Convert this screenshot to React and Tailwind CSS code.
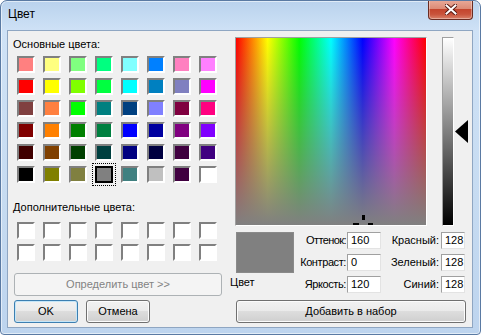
import React from "react";

// стандартная палитра диалога выбора цвета Windows
const BASIC = [
  ["#ff8080", "#ffff80", "#80ff80", "#00ff80", "#80ffff", "#0080ff", "#ff80c0", "#ff80ff"],
  ["#ff0000", "#ffff00", "#80ff00", "#00ff40", "#00ffff", "#0080c0", "#8080c0", "#ff00ff"],
  ["#804040", "#ff8040", "#00ff00", "#008080", "#004080", "#8080ff", "#800040", "#ff0080"],
  ["#800000", "#ff8000", "#008000", "#008040", "#0000ff", "#0000a0", "#800080", "#8000ff"],
  ["#400000", "#804000", "#004000", "#004040", "#000080", "#000040", "#400040", "#400080"],
  ["#000000", "#808000", "#808040", "#808080", "#408080", "#c0c0c0", "#400040", "#ffffff"],
];

const SELECTED = "5-3";

function Swatch({ color, selected }) {
  if (selected) {
    return (
      <div className="relative w-[18px] h-[17px]">
        <span className="absolute -inset-[3px] border border-dotted border-black" />
        <div className="w-full h-full border-2 border-black" style={{ background: color }} />
      </div>
    );
  }
  return (
    <div
      className="w-[18px] h-[17px] border-2 border-t-[#808080] border-l-[#808080] border-b-white border-r-white"
      style={{ background: color }}
    />
  );
}

function Field({ value, w }) {
  return (
    <div
      className={`${w} h-[17px] bg-white border border-t-[#a0a0a0] border-l-[#a0a0a0] border-b-[#e3e3e3] border-r-[#e3e3e3] pl-[3px] leading-[15px]`}
    >
      {value}
    </div>
  );
}

function Btn({ children, className = "", kind = "normal" }) {
  const look =
    kind === "default"
      ? "border-[#3c7fb1] shadow-[inset_0_0_0_1px_#c5e6f8] text-black"
      : kind === "disabled"
      ? "border-[#adb2b5] bg-[#f4f4f4] text-[#838383]"
      : "border-[#707070] shadow-[inset_0_0_0_1px_#fcfcfc] text-black";
  const bg =
    kind === "disabled"
      ? ""
      : "bg-[linear-gradient(to_bottom,#f2f2f2,#ebebeb_45%,#dddddd_50%,#cfcfcf)]";
  return (
    <div className={`h-[23px] rounded-[3px] border flex items-center justify-center ${look} ${bg} ${className}`}>
      {children}
    </div>
  );
}

export default function App() {
  return (
    <div className="w-[481px] h-[335px] overflow-hidden rounded-t-[7px] rounded-b-[4px] border border-[#5a7aa3] bg-[linear-gradient(to_bottom,#b9d2ed,#cfe2f6_30px,#c6dbf1_60%,#bdd4ee)] shadow-[inset_0_0_0_1px_rgba(255,255,255,0.55)] font-['Liberation_Sans',Arial,sans-serif] text-[11px] text-black">
      {/* Title bar */}
      <div className="h-[29px] flex items-start justify-between">
        <div className="pl-[7px] pt-[6px] text-[12px] leading-[14px]">Цвет</div>
        <div className="-mt-px mr-[7px] w-[45px] h-[20px] rounded-b-[4px] border border-t-0 border-[#6a2c22] bg-[linear-gradient(to_bottom,#e9ab9a,#dc8b76_45%,#c4452d_50%,#c9533b_75%,#d9826a)] shadow-[inset_0_0_0_1px_rgba(255,255,255,0.35)] flex items-center justify-center">
          <svg width="12" height="11" viewBox="0 0 12 11">
            <path d="M1.5 1.5 L10.5 9.5 M10.5 1.5 L1.5 9.5" stroke="#5a1a12" strokeWidth="4" strokeLinecap="square" />
            <path d="M1.5 1.5 L10.5 9.5 M10.5 1.5 L1.5 9.5" stroke="#ffffff" strokeWidth="2" strokeLinecap="square" />
          </svg>
        </div>
      </div>

      {/* Client area */}
      <div className="ml-[6px] w-[466px] h-[298px] border border-[#8fa6c2] bg-[#f0f0f0] flex">
        {/* Left column */}
        <div className="ml-[5px] w-[208px] flex flex-col">
          <div className="mt-[7px] leading-[13px]">Основные цвета:</div>
          <div className="mt-[5px] ml-[4px] grid grid-cols-[repeat(8,18px)] gap-x-[8px] gap-y-[5px]">
            {BASIC.map((row, r) =>
              row.map((c, i) => <Swatch key={`${r}-${i}`} color={c} selected={`${r}-${i}` === SELECTED} />)
            )}
          </div>
          <div className="mt-[18px] leading-[13px]">Дополнительные цвета:</div>
          <div className="mt-[8px] ml-[4px] grid grid-cols-[repeat(8,18px)] gap-x-[8px] gap-y-[5px]">
            {Array.from({ length: 16 }).map((_, i) => (
              <Swatch key={i} color="#ffffff" />
            ))}
          </div>
          <Btn kind="disabled" className="mt-[12px] ml-px w-[208px]">
            Определить цвет &gt;&gt;
          </Btn>
          <div className="mt-[4px] ml-px flex gap-[8px]">
            <Btn kind="default" className="w-[64px]">OK</Btn>
            <Btn className="w-[64px]">Отмена</Btn>
          </div>
        </div>

        {/* Right column */}
        <div className="ml-[9px] w-[240px] flex flex-col">
          <div className="mt-[6px] flex items-start">
            <div className="relative ml-[5px] w-[192px] h-[189px] border border-t-[#a0a0a0] border-l-[#a0a0a0] border-b-white border-r-white bg-[linear-gradient(to_right,#ff0000,#ffff00,#00ff00,#00ffff,#0000ff,#ff00ff,#ff0000)]">
              <div className="w-full h-full bg-[linear-gradient(to_bottom,rgba(128,128,128,0),#808080)]" />
              {/* crosshair */}
              <span className="absolute left-[126px] top-[177px] w-[3px] h-[5px] bg-black" />
              <span className="absolute left-[117px] top-[185px] w-[6px] h-[2px] bg-black" />
              <span className="absolute left-[132px] top-[185px] w-[5px] h-[2px] bg-black" />
            </div>
            <div className="ml-[15px] w-[12px] h-[189px] border border-t-[#a0a0a0] border-l-[#a0a0a0] border-b-white border-r-white bg-[linear-gradient(to_bottom,#ffffff,#000000)]" />
            <svg className="ml-px mt-[83px]" width="13" height="23" viewBox="0 0 13 23">
              <polygon points="0,11.5 13,0 13,23" fill="#000" />
            </svg>
          </div>

          <div className="mt-[6px] flex">
            <div className="w-[65px] flex flex-col">
              <div className="ml-[6px] w-[58px] h-[41px] bg-[#808080] border border-[#8a8a8a]" />
              <div className="mt-[3px] leading-[13px]">Цвет</div>
            </div>
            <div className="grid grid-cols-[52px_34px_60px_24px] gap-y-[5px] items-center">
              <div className="text-right pr-[1px] tracking-[-0.6px]">Оттенок:</div>
              <Field value="160" w="w-[34px]" />
              <div className="text-right pr-[2px]">Красный:</div>
              <Field value="128" w="w-[24px]" />

              <div className="text-right pr-[1px] tracking-[-0.4px]">Контраст:</div>
              <Field value="0" w="w-[34px]" />
              <div className="text-right pr-[2px]">Зеленый:</div>
              <Field value="128" w="w-[24px]" />

              <div className="text-right pr-[1px] tracking-[-0.4px]">Яркость:</div>
              <Field value="120" w="w-[34px]" />
              <div className="text-right pr-[2px]">Синий:</div>
              <Field value="128" w="w-[24px]" />
            </div>
          </div>

          <Btn className="mt-[7px] ml-[6px] w-[230px]">Добавить в набор</Btn>
        </div>
      </div>
    </div>
  );
}
